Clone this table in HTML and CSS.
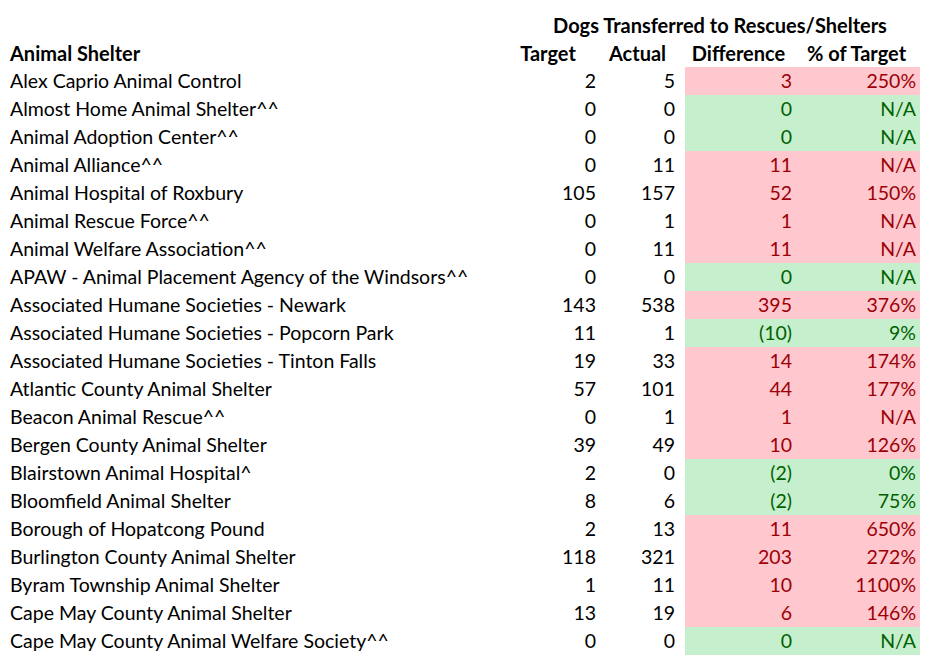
FILE: index.html
```html
<!DOCTYPE html>
<html>
<head>
<meta charset="utf-8">
<link rel="stylesheet" href="styles.css">
</head>
<body>
<table class="sheet">
<colgroup>
<col class="c-name"><col class="c-target"><col class="c-actual"><col class="c-diff"><col class="c-pct">
</colgroup>
<thead>
<tr class="title-row"><th></th><th colspan="4" class="title">Dogs Transferred to Rescues/Shelters</th></tr>
<tr class="head-row"><th class="name">Animal Shelter</th><th class="h-target">Target</th><th class="h-actual">Actual</th><th class="h-diff">Difference</th><th class="h-pct">% of Target</th></tr>
</thead>
<tbody>
<tr><td class="name">Alex Caprio Animal Control</td><td class="num t">2</td><td class="num a">5</td><td class="num d bad">3</td><td class="num p bad">250%</td></tr>
<tr><td class="name">Almost Home Animal Shelter^^</td><td class="num t">0</td><td class="num a">0</td><td class="num d good">0</td><td class="num p good">N/A</td></tr>
<tr><td class="name">Animal Adoption Center^^</td><td class="num t">0</td><td class="num a">0</td><td class="num d good">0</td><td class="num p good">N/A</td></tr>
<tr><td class="name">Animal Alliance^^</td><td class="num t">0</td><td class="num a">11</td><td class="num d bad">11</td><td class="num p bad">N/A</td></tr>
<tr><td class="name">Animal Hospital of Roxbury</td><td class="num t">105</td><td class="num a">157</td><td class="num d bad">52</td><td class="num p bad">150%</td></tr>
<tr><td class="name">Animal Rescue Force^^</td><td class="num t">0</td><td class="num a">1</td><td class="num d bad">1</td><td class="num p bad">N/A</td></tr>
<tr><td class="name">Animal Welfare Association^^</td><td class="num t">0</td><td class="num a">11</td><td class="num d bad">11</td><td class="num p bad">N/A</td></tr>
<tr><td class="name">APAW - Animal Placement Agency of the Windsors^^</td><td class="num t">0</td><td class="num a">0</td><td class="num d good">0</td><td class="num p good">N/A</td></tr>
<tr><td class="name">Associated Humane Societies - Newark</td><td class="num t">143</td><td class="num a">538</td><td class="num d bad">395</td><td class="num p bad">376%</td></tr>
<tr><td class="name">Associated Humane Societies - Popcorn Park</td><td class="num t">11</td><td class="num a">1</td><td class="num d good">(10)</td><td class="num p good">9%</td></tr>
<tr><td class="name">Associated Humane Societies - Tinton Falls</td><td class="num t">19</td><td class="num a">33</td><td class="num d bad">14</td><td class="num p bad">174%</td></tr>
<tr><td class="name">Atlantic County Animal Shelter</td><td class="num t">57</td><td class="num a">101</td><td class="num d bad">44</td><td class="num p bad">177%</td></tr>
<tr><td class="name">Beacon Animal Rescue^^</td><td class="num t">0</td><td class="num a">1</td><td class="num d bad">1</td><td class="num p bad">N/A</td></tr>
<tr><td class="name">Bergen County Animal Shelter</td><td class="num t">39</td><td class="num a">49</td><td class="num d bad">10</td><td class="num p bad">126%</td></tr>
<tr><td class="name">Blairstown Animal Hospital^</td><td class="num t">2</td><td class="num a">0</td><td class="num d good">(2)</td><td class="num p good">0%</td></tr>
<tr><td class="name">Bloomfield Animal Shelter</td><td class="num t">8</td><td class="num a">6</td><td class="num d good">(2)</td><td class="num p good">75%</td></tr>
<tr><td class="name">Borough of Hopatcong Pound</td><td class="num t">2</td><td class="num a">13</td><td class="num d bad">11</td><td class="num p bad">650%</td></tr>
<tr><td class="name">Burlington County Animal Shelter</td><td class="num t">118</td><td class="num a">321</td><td class="num d bad">203</td><td class="num p bad">272%</td></tr>
<tr><td class="name">Byram Township Animal Shelter</td><td class="num t">1</td><td class="num a">11</td><td class="num d bad">10</td><td class="num p bad">1100%</td></tr>
<tr><td class="name">Cape May County Animal Shelter</td><td class="num t">13</td><td class="num a">19</td><td class="num d bad">6</td><td class="num p bad">146%</td></tr>
<tr><td class="name">Cape May County Animal Welfare Society^^</td><td class="num t">0</td><td class="num a">0</td><td class="num d good">0</td><td class="num p good">N/A</td></tr>
</tbody>
</table>
</body>
</html>
```
FILE: styles.css
```css
html, body {
  margin: 0;
  padding: 0;
  background: #ffffff;
}
body {
  font-family: "Lato", "Liberation Sans", sans-serif;
  font-size: 19.5px;
  color: #000000;
}
.sheet {
  margin-top: 11px;
  border-collapse: collapse;
  table-layout: fixed;
  width: 920px;
}
.c-name { width: 500px; }
.c-target { width: 100px; }
.c-actual { width: 85px; }
.c-diff { width: 112px; }
.c-pct { width: 123px; }
.sheet th, .sheet td {
  height: 28px;
  padding: 0;
  white-space: nowrap;
  vertical-align: middle;
  line-height: 28px;
}
.sheet th {
  font-weight: bold;
  text-align: center;
  font-size: 20px;
}
.sheet .title {
  padding-left: 20px;
}
.sheet .name {
  text-align: left;
  padding-left: 10px;
}
.sheet .num { text-align: right; }
.sheet .t, .sheet .h-target { padding-right: 4px; }
.sheet .a, .sheet .h-actual { padding-right: 10px; }
.sheet .d, .sheet .h-diff { padding-right: 5px; }
.sheet .p, .sheet .h-pct { padding-right: 4px; }
.bad {
  background: #ffc7ce;
  color: #9c0006;
}
.good {
  background: #c6efce;
  color: #006100;
}
```
